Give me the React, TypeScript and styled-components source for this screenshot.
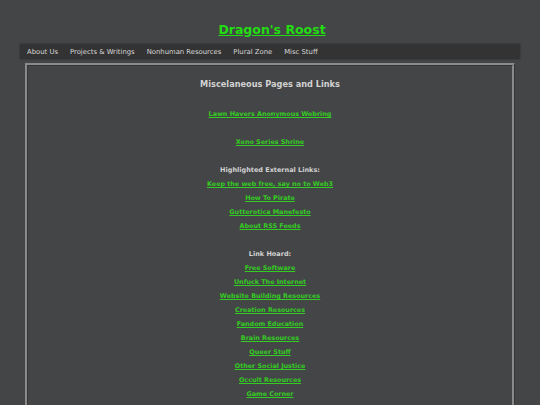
import styled, { createGlobalStyle } from 'styled-components';

const GlobalStyle = createGlobalStyle`
  html, body {
    margin: 0;
    padding: 0;
    background: #444547;
  }
  body {
    font-family: "DejaVu Sans", Verdana, sans-serif;
  }
`;

const Page = styled.div`
  width: 500px;
  margin: 0 auto;
  padding-top: 22px;
`;

const SiteTitle = styled.h1`
  margin: 0 0 7px 4px;
  text-align: center;
  font-size: 12.5px;
  line-height: 15px;
  font-weight: bold;

  a {
    color: #22dd11;
    text-decoration: underline;
  }
`;

const NavBar = styled.nav`
  display: flex;
  align-items: center;
  height: 15px;
  padding: 0 0 0 1px;
  background: #333333;
  box-shadow: 0 0 2px rgba(0, 0, 0, 0.4);
`;

const NavItem = styled.a`
  padding: 0 6px;
  font-size: 6.85px;
  color: #d6d6d6;
  text-decoration: none;
  white-space: nowrap;
`;

const ContentBox = styled.main`
  margin: 4px 5px 0 5px;
  border: 3px ridge #8a8a8a;
  padding: 13px 0 20px 0;
  display: flex;
  flex-direction: column;
  align-items: center;
`;

const Heading = styled.h2`
  margin: 0 0 18px 0;
  font-size: 8.2px;
  line-height: 10px;
  font-weight: bold;
  color: #d2d2d2;
`;

const Section = styled.section<{ $gap: number }>`
  display: flex;
  flex-direction: column;
  align-items: center;
  margin-bottom: ${(p) => p.$gap}px;
`;

const SubHeading = styled.div`
  font-size: 6.5px;
  line-height: 14px;
  font-weight: bold;
  color: #d2d2d2;
`;

const LinkItem = styled.a`
  font-size: 6.4px;
  line-height: 14px;
  font-weight: bold;
  color: #33cc22;
  text-decoration: underline;
`;

const external = [
  'Keep the web free, say no to Web3',
  'How To Pirate',
  'Gutterotica Manefesto',
  'About RSS Feeds',
];

const hoard = [
  'Free Software',
  'Unfuck The Internet',
  'Website Building Resources',
  'Creation Resources',
  'Fandom Education',
  'Brain Resources',
  'Queer Stuff',
  'Other Social Justice',
  'Occult Resources',
  'Game Corner',
];

export default function App() {
  return (
    <>
      <GlobalStyle />
      <Page>
        <SiteTitle>
          <a href="#">Dragon's Roost</a>
        </SiteTitle>
        <NavBar>
          <NavItem href="#">About Us</NavItem>
          <NavItem href="#">Projects &amp; Writings</NavItem>
          <NavItem href="#">Nonhuman Resources</NavItem>
          <NavItem href="#">Plural Zone</NavItem>
          <NavItem href="#">Misc Stuff</NavItem>
        </NavBar>
        <ContentBox>
          <Heading>Miscelaneous Pages and Links</Heading>
          <Section $gap={14}>
            <LinkItem href="#">Lawn Havers Anonymous Webring</LinkItem>
          </Section>
          <Section $gap={14}>
            <LinkItem href="#">Xeno Series Shrine</LinkItem>
          </Section>
          <Section $gap={14}>
            <SubHeading>Highlighted External Links:</SubHeading>
            {external.map((l) => (
              <LinkItem key={l} href="#">
                {l}
              </LinkItem>
            ))}
          </Section>
          <Section $gap={14}>
            <SubHeading>Link Hoard:</SubHeading>
            {hoard.map((l) => (
              <LinkItem key={l} href="#">
                {l}
              </LinkItem>
            ))}
          </Section>
        </ContentBox>
      </Page>
    </>
  );
}
